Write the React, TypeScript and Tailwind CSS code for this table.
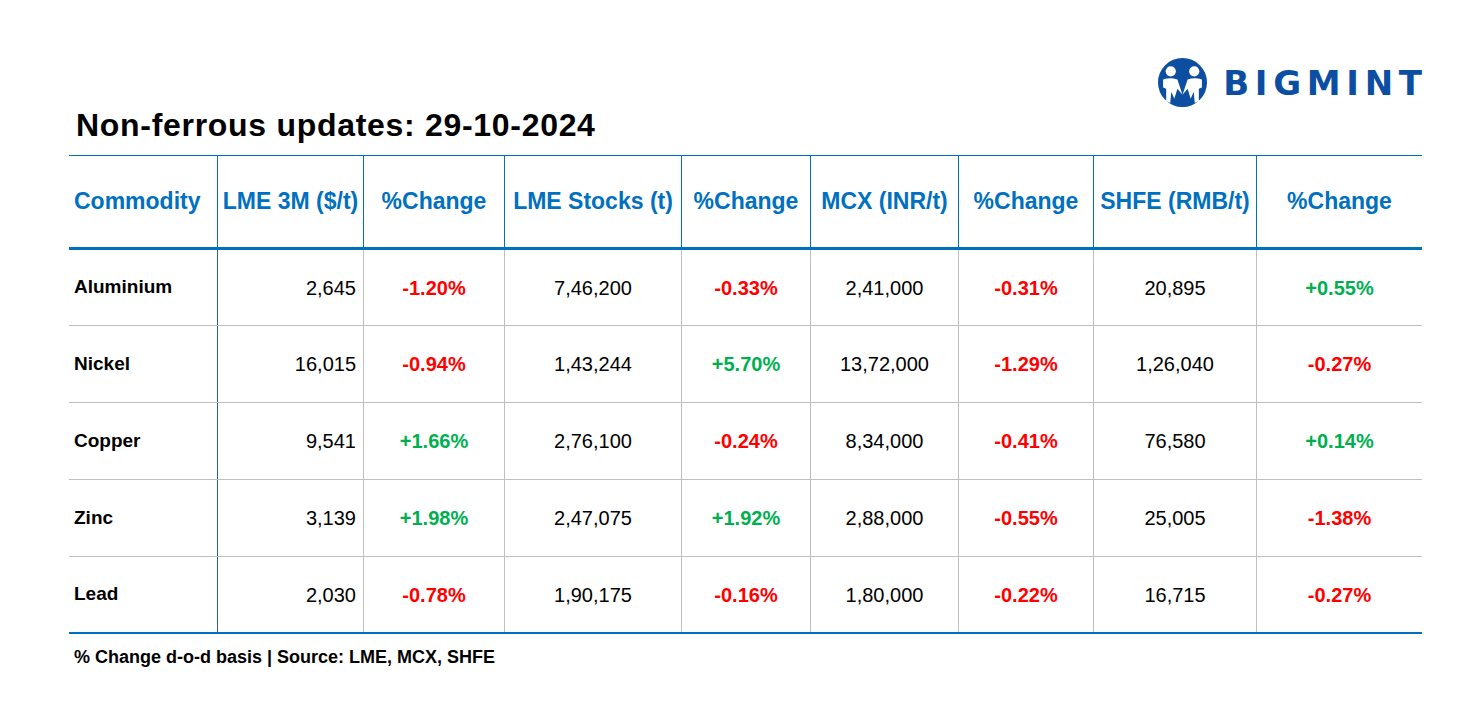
import React from 'react';

type Row = {
  name: string;
  lme: string;
  lmeChg: string;
  stocks: string;
  stocksChg: string;
  mcx: string;
  mcxChg: string;
  shfe: string;
  shfeChg: string;
};

const rows: Row[] = [
  { name: 'Aluminium', lme: '2,645', lmeChg: '-1.20%', stocks: '7,46,200', stocksChg: '-0.33%', mcx: '2,41,000', mcxChg: '-0.31%', shfe: '20,895', shfeChg: '+0.55%' },
  { name: 'Nickel', lme: '16,015', lmeChg: '-0.94%', stocks: '1,43,244', stocksChg: '+5.70%', mcx: '13,72,000', mcxChg: '-1.29%', shfe: '1,26,040', shfeChg: '-0.27%' },
  { name: 'Copper', lme: '9,541', lmeChg: '+1.66%', stocks: '2,76,100', stocksChg: '-0.24%', mcx: '8,34,000', mcxChg: '-0.41%', shfe: '76,580', shfeChg: '+0.14%' },
  { name: 'Zinc', lme: '3,139', lmeChg: '+1.98%', stocks: '2,47,075', stocksChg: '+1.92%', mcx: '2,88,000', mcxChg: '-0.55%', shfe: '25,005', shfeChg: '-1.38%' },
  { name: 'Lead', lme: '2,030', lmeChg: '-0.78%', stocks: '1,90,175', stocksChg: '-0.16%', mcx: '1,80,000', mcxChg: '-0.22%', shfe: '16,715', shfeChg: '-0.27%' },
];

const headers = ['LME 3M ($/t)', '%Change', 'LME Stocks (t)', '%Change', 'MCX (INR/t)', '%Change', 'SHFE (RMB/t)', '%Change'];

const cols = 'grid grid-cols-[148px_146px_141px_177px_129px_148px_135px_163px_166px]';

// row heights incl. their bottom border, measured off the screenshot
const rowH = ['h-[76px] border-b border-[#bfbfbf]', 'h-[77px] border-b border-[#bfbfbf]', 'h-[77px] border-b border-[#bfbfbf]', 'h-[77px] border-b border-[#bfbfbf]', 'h-[77px] border-b-2 border-[#0070c0]'];

function Logo() {
  return (
    <div className="flex items-center">
      <svg width="49" height="49" viewBox="0 0 48 48">
        <circle cx="24" cy="24" r="24" fill="#0b4ea2" />
        <circle cx="12.5" cy="13" r="5" fill="#fff" />
        <circle cx="35.5" cy="13" r="5" fill="#fff" />
        <path d="M5 21 Q12 18.5 19 21 L24 36 L19 30 L16 40 L13 33 L12 44 L8 42 L8 30 L5 29 Z" fill="#fff" />
        <path d="M43 21 Q36 18.5 29 21 L24 36 L29 30 L32 40 L35 33 L36 44 L40 42 L40 30 L43 29 Z" fill="#fff" />
        <path d="M21.5 42 L24 38 L26.5 42 L26 48 L22 48 Z" fill="#0b4ea2" />
      </svg>
      <span className="ml-[16px] mr-[-5.7px] text-[34px] font-bold leading-none tracking-[5.7px] text-[#0b4ea2] [font-family:'DejaVu_Sans',sans-serif]">
        BIGMINT
      </span>
    </div>
  );
}

function Pct({ v }: { v: string }) {
  return <span className={`font-bold ${v.startsWith('+') ? 'text-[#00b050]' : 'text-[#ff0000]'}`}>{v}</span>;
}

export default function App() {
  return (
    <div className="min-h-[722px] bg-white pt-[58px] pl-[69px] pr-[54px] text-black [font-family:'Liberation_Sans',Arial,sans-serif]">
      <div className="flex h-[49px] justify-end">
        <Logo />
      </div>
      <h1 className="ml-[7px] text-[32px] font-bold leading-[36px] tracking-[0.7px] mb-[12px]">
        Non-ferrous updates: 29-10-2024
      </h1>

      <div className="w-[1353px] border-t border-[#0070c0]">
        <div className={`${cols} h-[94px] border-b-[3px] border-[#0070c0]`}>
          <div className="flex items-center pl-[5px] text-[23px] font-bold text-[#0070c0]">Commodity</div>
          {headers.map((h, i) => (
            <div key={i} className="flex items-center justify-center border-l border-[#0070c0] text-[23px] font-bold text-[#0070c0] whitespace-nowrap">
              {h}
            </div>
          ))}
        </div>

        {rows.map((r, i) => (
          <div key={r.name} className={`${cols} text-[20px] ${rowH[i]}`}>
            <div className="flex items-center pl-[5px] text-[19px] font-bold">{r.name}</div>
            <div className="flex items-center justify-end pr-[7px] border-l border-[#2b5f9e]">{r.lme}</div>
            <div className="flex items-center justify-center border-l border-[#bfbfbf]"><Pct v={r.lmeChg} /></div>
            <div className="flex items-center justify-center border-l border-[#bfbfbf]">{r.stocks}</div>
            <div className="flex items-center justify-center border-l border-[#bfbfbf]"><Pct v={r.stocksChg} /></div>
            <div className="flex items-center justify-center border-l border-[#bfbfbf]">{r.mcx}</div>
            <div className="flex items-center justify-center border-l border-[#bfbfbf]"><Pct v={r.mcxChg} /></div>
            <div className="flex items-center justify-center border-l border-[#bfbfbf]">{r.shfe}</div>
            <div className="flex items-center justify-center border-l border-[#bfbfbf]"><Pct v={r.shfeChg} /></div>
          </div>
        ))}
      </div>

      <p className="ml-[5px] mt-[11px] text-[18px] font-bold leading-[24px]">
        % Change d-o-d basis | Source: LME, MCX, SHFE
      </p>
    </div>
  );
}
